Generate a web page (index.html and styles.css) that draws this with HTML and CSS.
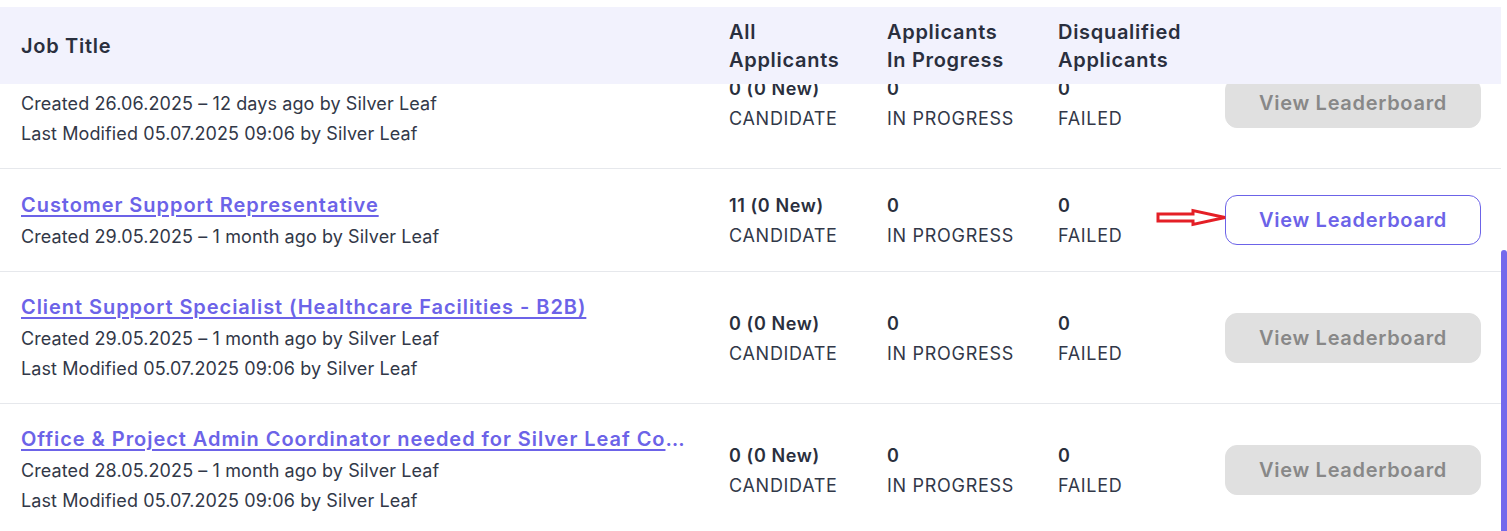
FILE: index.html
```html
<!DOCTYPE html>
<html>
<head>
<meta charset="utf-8">
<link rel="stylesheet" href="styles.css">
</head>
<body>
<div class="page">
  <div class="table">
    <div class="thead">
      <div class="th th-title">Job Title</div>
      <div class="th">All<br>Applicants</div>
      <div class="th">Applicants<br>In Progress</div>
      <div class="th">Disqualified<br>Applicants</div>
      <div class="th"></div>
    </div>
    <div class="tbody">
      <div class="row">
        <div class="cell-title">
          <a class="job-link" href="#">Sales Development Representative</a>
          <div class="meta">Created 26.06.2025 – 12 days ago by Silver Leaf</div>
          <div class="meta">Last Modified 05.07.2025 09:06 by Silver Leaf</div>
        </div>
        <div class="stat"><div class="num">0 (0 New)</div><div class="label">CANDIDATE</div></div>
        <div class="stat"><div class="num">0</div><div class="label">IN PROGRESS</div></div>
        <div class="stat"><div class="num">0</div><div class="label">FAILED</div></div>
        <div class="action"><button class="btn btn-disabled">View Leaderboard</button></div>
      </div>
      <div class="row">
        <div class="cell-title">
          <a class="job-link" href="#">Customer Support Representative</a>
          <div class="meta">Created 29.05.2025 – 1 month ago by Silver Leaf</div>
        </div>
        <div class="stat"><div class="num">11 (0 New)</div><div class="label">CANDIDATE</div></div>
        <div class="stat"><div class="num">0</div><div class="label">IN PROGRESS</div></div>
        <div class="stat"><div class="num">0</div><div class="label">FAILED</div></div>
        <div class="action">
          <svg class="annot-arrow" width="72" height="20" viewBox="0 0 72 20"><path d="M3 6 L38 6 L38 2.5 L70 9.5 L38 16.5 L38 13 L3 13 Z" fill="#fff" stroke="#e41f26" stroke-width="3" stroke-linejoin="miter"/></svg>
          <button class="btn btn-active">View Leaderboard</button>
        </div>
      </div>
      <div class="row">
        <div class="cell-title">
          <a class="job-link" href="#">Client Support Specialist (Healthcare Facilities - B2B)</a>
          <div class="meta">Created 29.05.2025 – 1 month ago by Silver Leaf</div>
          <div class="meta">Last Modified 05.07.2025 09:06 by Silver Leaf</div>
        </div>
        <div class="stat"><div class="num">0 (0 New)</div><div class="label">CANDIDATE</div></div>
        <div class="stat"><div class="num">0</div><div class="label">IN PROGRESS</div></div>
        <div class="stat"><div class="num">0</div><div class="label">FAILED</div></div>
        <div class="action"><button class="btn btn-disabled">View Leaderboard</button></div>
      </div>
      <div class="row row-thick">
        <div class="cell-title">
          <a class="job-link" href="#">Office &amp; Project Admin Coordinator needed for Silver Leaf Construction Group</a>
          <div class="meta">Created 28.05.2025 – 1 month ago by Silver Leaf</div>
          <div class="meta">Last Modified 05.07.2025 09:06 by Silver Leaf</div>
        </div>
        <div class="stat"><div class="num">0 (0 New)</div><div class="label">CANDIDATE</div></div>
        <div class="stat"><div class="num">0</div><div class="label">IN PROGRESS</div></div>
        <div class="stat"><div class="num">0</div><div class="label">FAILED</div></div>
        <div class="action"><button class="btn btn-disabled">View Leaderboard</button></div>
      </div>
    </div>
  </div>
  <div class="scroll-thumb"></div>
</div>
</body>
</html>
```
FILE: styles.css
```css
* { box-sizing: border-box; }
html, body { margin: 0; padding: 0; background: #fff; overflow: hidden; }
body {
  font-family: Inter, "Noto Sans", sans-serif;
  color: #2e3445;
  width: 1507px;
  height: 531px;
}
.page {
  position: relative;
  height: 531px;
  padding-top: 7px;
  overflow: hidden;
}
.table { width: 1501px; }
.thead, .row {
  display: grid;
  grid-template-columns: 708px 158px 171px 167px 256px;
  padding: 0 20px 0 21px;
}
.thead {
  position: relative;
  z-index: 2;
  height: 77px;
  background: #f2f2fd;
  align-items: center;
  margin-bottom: -47px;
}
.th {
  font-size: 20px;
  font-weight: 600;
  line-height: 28px;
  color: #2a2f3e;
  letter-spacing: 0.7px;
}
.row {
  align-items: center;
  padding-top: 20px;
  padding-bottom: 20px;
  border-bottom: 1px solid #e6e8ec;
}
.row-thick { border-bottom-width: 2px; }
.cell-title { min-width: 0; }
.job-link {
  display: block;
  max-width: 669px;
  white-space: nowrap;
  overflow: hidden;
  text-overflow: ellipsis;
  font-size: 20px;
  font-weight: 600;
  line-height: 31px;
  color: #6c63e8;
  text-decoration: underline;
  text-underline-offset: 3px;
  text-decoration-thickness: 2px;
  letter-spacing: 0.95px;
}
.meta {
  font-size: 18px;
  line-height: 29px;
  margin-top: 1px;
  color: #323848;
  letter-spacing: 0.1px;
}
.stat { font-size: 18px; line-height: 30px; padding-top: 2px; }
.num { font-weight: 600; color: #2a2f3e; letter-spacing: 0.6px; }
.label { color: #323848; letter-spacing: 0.7px; }
.action { position: relative; }
.btn {
  width: 256px;
  height: 50px;
  border-radius: 12px;
  font-family: inherit;
  font-size: 20px;
  font-weight: 600;
  letter-spacing: 0.7px;
  cursor: pointer;
}
.btn-disabled {
  background: #e0e0e0;
  border: 1px solid #e0e0e0;
  color: #888888;
}
.btn-active {
  background: #fff;
  border: 1px solid #6c63e8;
  color: #6c63e8;
}
.annot-arrow {
  position: absolute;
  right: 100%;
  top: 50%;
  margin-top: -12px;
  margin-right: -2px;
}
.scroll-thumb {
  position: absolute;
  right: 0;
  top: 250px;
  width: 6px;
  height: 290px;
  background: #7469ec;
  border-radius: 4px 4px 0 0;
}
```
